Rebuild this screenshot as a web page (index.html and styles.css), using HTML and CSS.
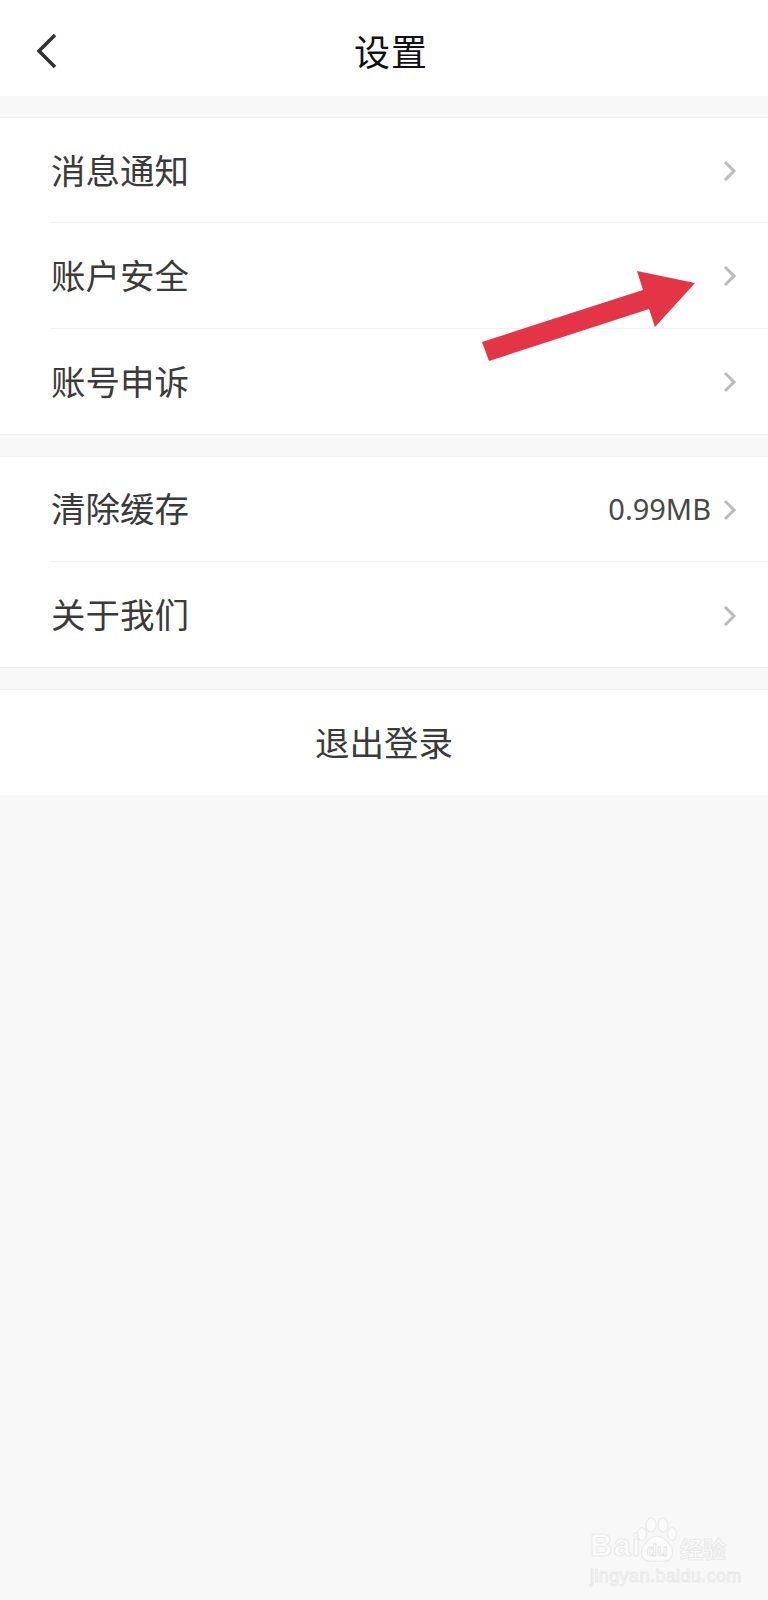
FILE: index.html
```html
<!DOCTYPE html>
<html lang="zh-CN">
<head>
  <meta charset="utf-8">
  <title>设置</title>
  <link rel="stylesheet" href="styles.css">
</head>
<body>
  <div class="page">
    <header class="top-bar">
      <svg class="back-icon" width="24" height="38" viewBox="0 0 24 38">
        <path d="M20 3 L4 19 L20 35" fill="none" stroke="#333" stroke-width="3.6"/>
      </svg>
      <h1>设置</h1>
    </header>

    <section class="group">
      <div class="row">
        <span class="row-name">消息通知</span>
        <svg class="chevron" width="14" height="22" viewBox="0 0 14 22"><path d="M2 2 L11 11 L2 20" fill="none" stroke="#bbb" stroke-width="3"/></svg>
      </div>
      <div class="row">
        <span class="row-name">账户安全</span>
        <svg class="chevron" width="14" height="22" viewBox="0 0 14 22"><path d="M2 2 L11 11 L2 20" fill="none" stroke="#bbb" stroke-width="3"/></svg>
      </div>
      <div class="row">
        <span class="row-name">账号申诉</span>
        <svg class="chevron" width="14" height="22" viewBox="0 0 14 22"><path d="M2 2 L11 11 L2 20" fill="none" stroke="#bbb" stroke-width="3"/></svg>
      </div>
    </section>

    <section class="group">
      <div class="row">
        <span class="row-name">清除缓存</span>
        <span class="row-value">0.99MB</span>
        <svg class="chevron" width="14" height="22" viewBox="0 0 14 22"><path d="M2 2 L11 11 L2 20" fill="none" stroke="#bbb" stroke-width="3"/></svg>
      </div>
      <div class="row">
        <span class="row-name">关于我们</span>
        <svg class="chevron" width="14" height="22" viewBox="0 0 14 22"><path d="M2 2 L11 11 L2 20" fill="none" stroke="#bbb" stroke-width="3"/></svg>
      </div>
    </section>

    <section class="group logout">退出登录</section>

    <!-- red arrow drawn on top of the screenshot -->
    <svg class="arrow" width="240" height="110" viewBox="0 0 240 110">
      <polygon points="1,73 8,92 168,40 174,58 214,14 156,2 162,21" fill="#e33545"/>
    </svg>

    <div class="watermark">
      <div class="wm-top">
        <span class="wm-bai">Bai</span>
        <svg class="wm-paw" width="42" height="46" viewBox="0 0 42 46">
          <g fill="#fbfbfb" stroke="#eaeaea" stroke-width="1.2">
            <ellipse cx="6" cy="17" rx="4.5" ry="6.5"/>
            <ellipse cx="15" cy="8" rx="5" ry="7"/>
            <ellipse cx="27" cy="8" rx="5" ry="7"/>
            <ellipse cx="36" cy="17" rx="4.5" ry="6.5"/>
            <path d="M21 19 C29 19 39 31 36 39 C33 46 26 44 21 44 C16 44 9 46 6 39 C3 31 13 19 21 19 Z"/>
          </g>
          <text x="21" y="39" class="wm-du">du</text>
        </svg>
        <span class="wm-cn">经验</span>
      </div>
      <div class="wm-url">jingyan.baidu.com</div>
    </div>
  </div>
</body>
</html>
```

FILE: styles.css
```css
body {
  margin: 0;
  background-color: #f8f8f8;
  font-family: "Noto Sans CJK SC", "Noto Sans", sans-serif;
  color: #333;
}

.page {
  position: relative;
  width: 768px;
  height: 1600px;
  overflow: hidden;
}

.top-bar {
  height: 96px;
  background-color: #fff;
  display: flex;
  align-items: center;
  justify-content: center;
  position: relative;
}

.top-bar h1 {
  margin: 4px 0 0 14px;
  font-size: 36px;
  font-weight: 400;
  letter-spacing: 1px;
  line-height: 1;
  color: #111;
}

.back-icon {
  position: absolute;
  left: 35px;
  top: 32px;
}

.group {
  margin-top: 21px;
  background-color: #fff;
  border-top: 1px solid #f0f0f0;
  border-bottom: 1px solid #f0f0f0;
}

.row {
  height: 105.25px;
  box-sizing: border-box;
  margin-left: 50px;
  padding-right: 31px;
  padding-bottom: 3px;
  display: flex;
  align-items: center;
  border-bottom: 1px solid #f1f1f1;
}

.row:last-child {
  border-bottom: none;
}

.row-name {
  flex: 1;
  margin-left: 1px;
  font-size: 34.5px;
  color: #3a3a3a;
}

.row-value {
  font-family: "Noto Sans", sans-serif;
  font-size: 29px;
  margin-top: 2px;
  margin-right: 12px;
  color: #484848;
}

.chevron {
  margin-top: 5px;
}

.logout {
  height: 106px;
  box-sizing: border-box;
  padding-bottom: 3px;
  border-bottom: none;
  display: flex;
  align-items: center;
  justify-content: center;
  font-size: 34.5px;
  color: #3a3a3a;
}

/* overlays */
.arrow {
  position: absolute;
  left: 481px;
  top: 269px;
}

.watermark {
  position: absolute;
  left: 590px;
  top: 1517px;
  width: 145px;
  font-family: "Liberation Sans", sans-serif;
  color: #fbfbfb;
  -webkit-text-stroke: 1px #e9e9e9;
}

.wm-top {
  display: flex;
  align-items: flex-end;
  height: 46px;
}

.wm-bai {
  width: 46px;
  font-size: 31px;
  font-weight: 700;
  letter-spacing: 1px;
  line-height: 34px;
}

.wm-cn {
  margin-left: 2px;
  font-family: "Noto Sans CJK SC", sans-serif;
  font-size: 23px;
  font-weight: 700;
  line-height: 30px;
}

.wm-du {
  font-family: "Liberation Sans", sans-serif;
  font-size: 17px;
  font-weight: 700;
  text-anchor: middle;
  fill: #fbfbfb;
  stroke: #e2e2e2;
  stroke-width: 0.8;
}

.wm-url {
  font-size: 18px;
  line-height: 20px;
  letter-spacing: 0.4px;
  margin-top: 3px;
  white-space: nowrap;
}
```
